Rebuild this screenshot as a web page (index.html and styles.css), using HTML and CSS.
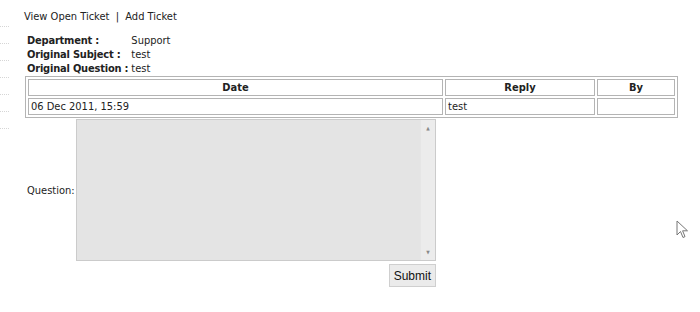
FILE: index.html
```html
<!DOCTYPE html>
<html lang="en">
<head>
  <meta charset="UTF-8" />
  <title>Ticket</title>
  <link rel="stylesheet" href="styles.css">
</head>
<body>
  <div class="side">
    <span></span><span></span><span></span><span></span><span></span><span></span><span></span>
  </div>

  <div class="main">
    <div class="nav"><a href="#">View Open Ticket</a> &nbsp;|&nbsp; <a href="#">Add Ticket</a></div>

    <table class="info">
      <tr><th>Department :</th><td>Support</td></tr>
      <tr><th>Original Subject :</th><td>test</td></tr>
      <tr><th>Original Question :</th><td>test</td></tr>
    </table>

    <table class="replies">
      <tr><th class="c-date">Date</th><th class="c-reply">Reply</th><th class="c-by">By</th></tr>
      <tr><td>06 Dec 2011, 15:59</td><td>test</td><td></td></tr>
    </table>

    <form class="ask">
      <label for="q">Question:</label>
      <div class="box">
        <textarea id="q"></textarea>
        <div class="bar"><span>&#9650;</span><span>&#9660;</span></div>
      </div>
      <div class="actions"><button type="button">Submit</button></div>
    </form>
  </div>

  <svg class="pointer" width="14" height="20" viewBox="0 0 14 20">
    <path d="M1 1 L1 15 L4.5 11.5 L7 17.5 L9 16.6 L6.6 10.8 L11.5 10.8 Z" fill="#fff" stroke="#777" stroke-width="1"/>
  </svg>
</body>
</html>
```

FILE: styles.css
```css
body {
  margin: 0;
  background: #fff;
  color: #222;
  font-family: "DejaVu Sans Condensed", "DejaVu Sans", sans-serif;
  font-size: 11px;
  display: flex;
}
.side {
  width: 9px;
  padding-top: 10px;
  display: flex;
  flex-direction: column;
}
.side span {
  height: 16px;
  border-bottom: 1px dotted #d6d6d6;
}
.main {
  margin-left: 15px;
  padding-top: 10px;
}
.nav a { color: #222; text-decoration: none; }
.nav { line-height: 14px; }

.info {
  border-collapse: collapse;
  margin: 10px 0 0 3px;
}
.info th {
  text-align: left;
  font-weight: bold;
  letter-spacing: -0.2px;
  padding: 0 3px 0 0;
  line-height: 14px;
}
.info td { padding: 0; line-height: 14px; }

.replies {
  border: 1px solid #b4b4b4;
  border-spacing: 2px;
  margin-left: 1px;
  width: 653px;
}
.replies th, .replies td {
  border: 1px solid #b4b4b4;
  padding: 0 2px;
  height: 15px;
  text-align: left;
}
.replies th { text-align: center; font-weight: bold; }
.c-date { width: 409px; }
.c-reply { width: 144px; }

.ask {
  display: grid;
  grid-template-columns: 49px 360px;
  row-gap: 3px;
  margin: 1px 0 0 3px;
  align-items: center;
}
.box {
  display: flex;
  height: 140px;
  border: 1px solid #cbcbcb;
  background: #e4e4e4;
}
.box textarea {
  flex: 1;
  border: none;
  background: #e4e4e4;
  resize: none;
  outline: none;
}
.bar {
  width: 14px;
  background: #ececec;
  border-left: 1px solid #e6e6e6;
  display: flex;
  flex-direction: column;
  justify-content: space-between;
  align-items: center;
  font-size: 5px;
  color: #888;
  padding: 5px 0;
}
.actions {
  grid-column: 2;
  text-align: right;
}
.actions button {
  font-family: "Liberation Sans", Arial, sans-serif;
  font-size: 12px;
  height: 23px;
  padding: 0 4px;
  background: #ebebeb;
  border: 1px solid #cfcfcf;
  color: #111;
}
.pointer {
  position: absolute;
  left: 676px;
  top: 220px;
}
```
